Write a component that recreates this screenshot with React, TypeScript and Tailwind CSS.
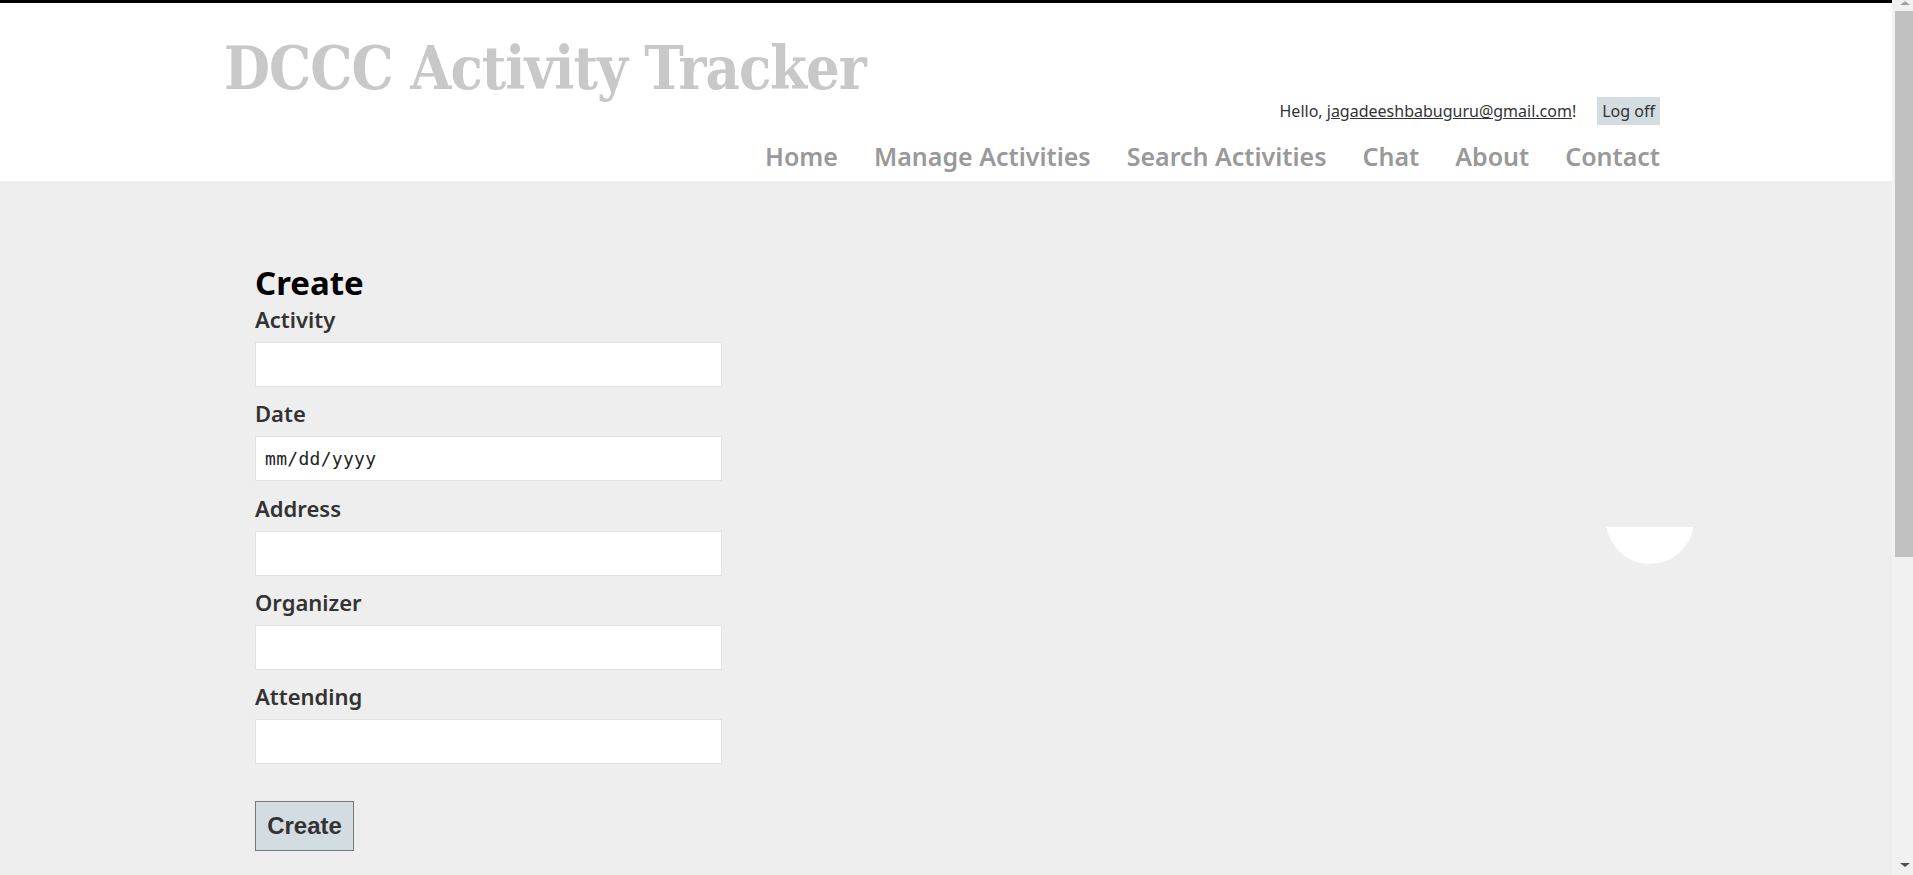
import { useState } from "react";

// ─── Data ─────────────────────────────────────────────────────────────────────

const navItems = ["Home", "Manage Activities", "Search Activities", "Chat", "About", "Contact"];

const fields = ["Activity", "Date", "Address", "Organizer", "Attending"];

const sans = "font-['Noto_Sans','Open_Sans',sans-serif]";

// ─── Pieces ───────────────────────────────────────────────────────────────────

function Header() {
  return (
    <header className="h-[178px] bg-white">
      <div className="mx-auto flex w-[1440px] items-start">
        {/* title floats left and may run under the menu */}
        <div className="min-w-0 flex-1">
          <div className="-ml-[2px] whitespace-nowrap pt-[36px] font-['DejaVu_Serif',serif] text-[59px] font-bold leading-none tracking-[-1px] text-[#c8c8c8] font-stretch-condensed">
            DCCC Activity Tracker
          </div>
        </div>

        <div className={`flex shrink-0 flex-col items-end whitespace-nowrap pr-[6px] pt-[94px] ${sans}`}>
          <div className="flex items-center text-[16px] text-[#333]">
            <span>
              Hello, <a className="underline">jagadeeshbabuguru@gmail.com</a>!
            </span>
            <a className="ml-[21px] bg-[#d3dce0] px-[5px] py-[3px] leading-[22px]">Log off</a>
          </div>
          <ul className="mt-[14px] flex gap-[36px] text-[25px] font-semibold leading-[34px] text-[#999]">
            {navItems.map((item) => (
              <li key={item}>
                <a>{item}</a>
              </li>
            ))}
          </ul>
        </div>
      </div>
    </header>
  );
}

function CreateForm() {
  const [values, setValues] = useState<Record<string, string>>({});

  return (
    <div className={`mx-auto w-[1440px] pl-[29px] pt-[82px] ${sans}`}>
      <h2 className="text-[33px] font-bold leading-[40px] text-black">Create</h2>
      <form className="flex flex-col" onSubmit={(e) => e.preventDefault()}>
        {fields.map((field) => (
          <div key={field} className="flex flex-col">
            <label className="text-[22px] font-semibold leading-[32px] text-[#333]">{field}</label>
            {field === "Date" ? (
              <input
                type="text"
                readOnly
                value="mm/dd/yyyy"
                className="mb-[10.3px] mt-[7px] h-[45px] w-[467px] border border-[#e2e2e2] bg-white px-[9px] font-['DejaVu_Sans_Mono',monospace] text-[18px] tracking-[0.3px] text-[#222] outline-none"
              />
            ) : (
              <input
                type="text"
                value={values[field] ?? ""}
                onChange={(e) => setValues({ ...values, [field]: e.target.value })}
                className="mb-[10.3px] mt-[7px] h-[45px] w-[467px] border border-[#e2e2e2] bg-white px-[9px] text-[18px] text-[#333] outline-none"
              />
            )}
          </div>
        ))}
        <div className="pt-[27px]">
          <button
            type="submit"
            className="h-[50px] w-[99px] border border-[#787878] bg-[#d3dce0] font-['Liberation_Sans',Arial,sans-serif] text-[24px] font-bold text-[#333]"
          >
            Create
          </button>
        </div>
      </form>
    </div>
  );
}

function Scrollbar() {
  return (
    <div className="relative flex w-[21px] flex-col bg-[#f1f1f1] pl-[3px]">
      <div className="absolute left-[8px] top-[1px] h-0 w-0 border-x-[5px] border-b-[4px] border-x-transparent border-b-[#a3a3a3]" />
      <div className="mt-[11px] h-[546px] bg-[#c1c1c1]" />
      <div className="absolute bottom-[8px] left-[8px] h-0 w-0 border-x-[5px] border-t-[4px] border-x-transparent border-t-[#505050]" />
    </div>
  );
}

// ─── Page ─────────────────────────────────────────────────────────────────────

export default function App() {
  return (
    <div className="flex h-[875px] w-[1913px] overflow-hidden">
      <div className="relative flex flex-1 flex-col">
        <div className="h-[3px] bg-black" />
        <Header />
        <main className="flex-1 bg-[#eeeeee]">
          <CreateForm />
        </main>
        {/* round chat bubble peeking from the right */}
        <div className="absolute left-[1606px] top-[527px] h-[37px] w-[88px] overflow-hidden">
          <div className="-mt-[51px] h-[88px] w-[88px] rounded-full bg-white" />
        </div>
      </div>
      <Scrollbar />
    </div>
  );
}
